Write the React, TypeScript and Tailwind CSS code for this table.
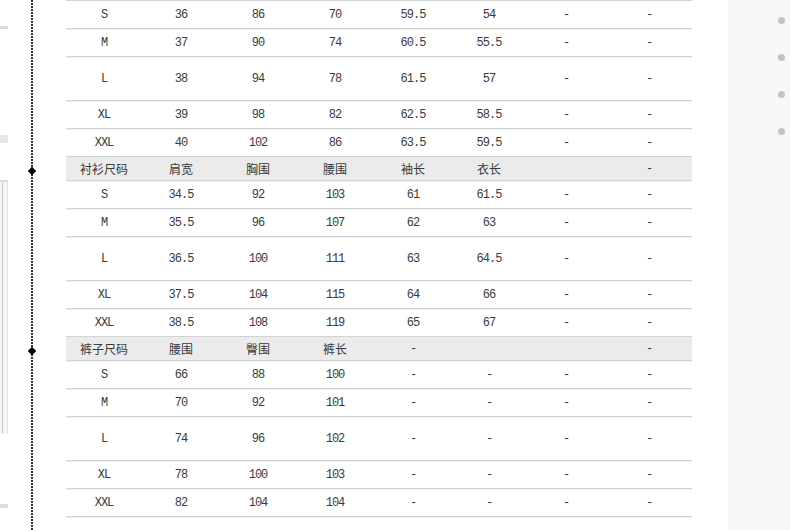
import React from "react";

type Row = string[];

const sec1: Row[] = [
  ["S", "36", "86", "70", "59.5", "54", "-", "-"],
  ["M", "37", "90", "74", "60.5", "55.5", "-", "-"],
  ["L", "38", "94", "78", "61.5", "57", "-", "-"],
  ["XL", "39", "98", "82", "62.5", "58.5", "-", "-"],
  ["XXL", "40", "102", "86", "63.5", "59.5", "-", "-"],
];
const header2: Row = ["衬衫尺码", "肩宽", "胸围", "腰围", "袖长", "衣长", "", "-"];
const sec2: Row[] = [
  ["S", "34.5", "92", "103", "61", "61.5", "-", "-"],
  ["M", "35.5", "96", "107", "62", "63", "-", "-"],
  ["L", "36.5", "100", "111", "63", "64.5", "-", "-"],
  ["XL", "37.5", "104", "115", "64", "66", "-", "-"],
  ["XXL", "38.5", "108", "119", "65", "67", "-", "-"],
];
const header3: Row = ["裤子尺码", "腰围", "臀围", "裤长", "-", "", "", "-"];
const sec3: Row[] = [
  ["S", "66", "88", "100", "-", "-", "-", "-"],
  ["M", "70", "92", "101", "-", "-", "-", "-"],
  ["L", "74", "96", "102", "-", "-", "-", "-"],
  ["XL", "78", "100", "103", "-", "-", "-", "-"],
  ["XXL", "82", "104", "104", "-", "-", "-", "-"],
];

const heights = ["h-[28px]", "h-[28px]", "h-[44px]", "h-[28px]", "h-[28px]"];
const gridCls =
  "grid grid-cols-[76px_78px_76px_78px_78px_74px_80px_86px] items-center border-b border-[#d2d2d2] shadow-[0_1px_0_#f0f0f0]";

function DataRow({ row, h }: { row: Row; h: string }) {
  return (
    <div className={`${gridCls} ${h}`}>
      {row.map((c, i) => (
        <div
          key={i}
          className="text-center text-[12px] leading-none tracking-[-1px] text-[#3a3a3a] [font-family:'Liberation_Mono','Noto_Sans_CJK_SC',monospace]"
        >
          {c}
        </div>
      ))}
    </div>
  );
}

function HeaderRow({ row }: { row: Row }) {
  return (
    <div className={`${gridCls} h-[24px] bg-[#ebebeb]`}>
      {row.map((c, i) => (
        <div
          key={i}
          className={
            c === "-"
              ? "text-center text-[12px] leading-none tracking-[-1px] text-[#3a3a3a] [font-family:'Liberation_Mono',monospace]"
              : "text-center text-[12px] leading-none text-[#3a3a3a] [font-family:'Noto_Sans_CJK_SC',sans-serif]"
          }
        >
          {c}
        </div>
      ))}
    </div>
  );
}

function Section({ rows }: { rows: Row[] }) {
  return (
    <>
      {rows.map((r, i) => (
        <DataRow key={i} row={r} h={heights[i]} />
      ))}
    </>
  );
}

export default function App() {
  return (
    <div className="flex h-[530px] w-[790px] overflow-hidden bg-white">
      {/* left cropped picture strip */}
      <div className="flex w-[8px] shrink-0 flex-col">
        <div className="h-[26px] shrink-0" />
        <div className="h-[3px] shrink-0 bg-[#d9d9d9]" />
        <div className="h-[106px] shrink-0" />
        <div className="h-[8px] shrink-0 bg-[#e6e6e6]" />
        <div className="h-[37px] shrink-0" />
        <div className="flex h-[254px] shrink-0 border-t-2 border-[#dcdcdc] bg-[#f6f6f6]">
          <div className="w-[2px]" />
          <div className="w-[1px] bg-[#c8c8c8]" />
          <div className="flex-1" />
          <div className="w-[1px] bg-[#e2e2e2]" />
        </div>
        <div className="h-[70px] shrink-0" />
        <div className="h-[4px] shrink-0 bg-[#dedede]" />
      </div>

      {/* dotted timeline */}
      <div className="relative ml-[23px] h-full w-[2px] shrink-0 bg-[image:repeating-linear-gradient(to_bottom,#333_0_2px,transparent_2px_3px)]">
        <div className="absolute left-[-2px] top-[168px] h-[6px] w-[6px] rotate-45 bg-black" />
        <div className="absolute left-[-2px] top-[348px] h-[6px] w-[6px] rotate-45 bg-black" />
      </div>

      {/* size table */}
      <div className="ml-[33px] flex w-[626px] shrink-0 flex-col border-t border-[#d2d2d2]">
        <Section rows={sec1} />
        <HeaderRow row={header2} />
        <Section rows={sec2} />
        <HeaderRow row={header3} />
        <Section rows={sec3} />
      </div>

      <div className="flex-1" />

      {/* right side panel */}
      <div className="flex w-[62px] shrink-0 flex-col gap-[30px] bg-[#f8f8f8] pl-[50px] pt-[17px]">
        {[0, 1, 2, 3].map((i) => (
          <div key={i} className="h-[7px] w-[7px] shrink-0 rounded-full bg-[#c6c3bc]" />
        ))}
      </div>
    </div>
  );
}
